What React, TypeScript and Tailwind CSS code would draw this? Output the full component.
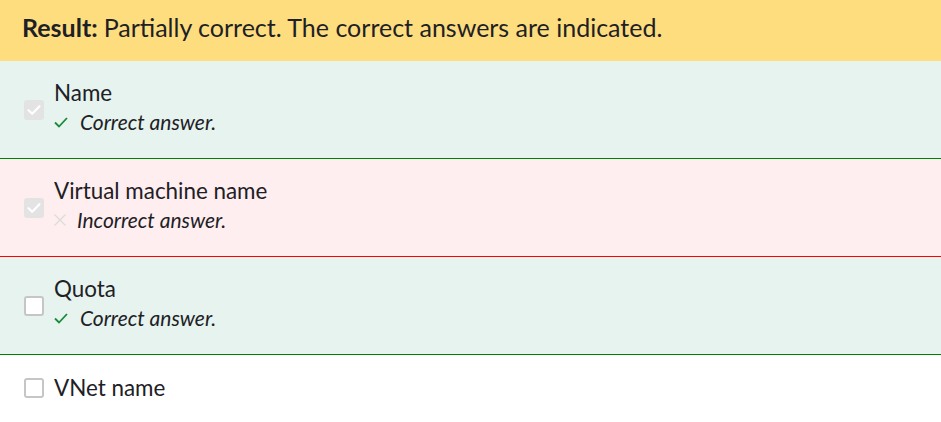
import React from "react";

type Opt = {
  label: string;
  checked: boolean;
  state?: "correct" | "incorrect";
};

const options: Opt[] = [
  { label: "Name", checked: true, state: "correct" },
  { label: "Virtual machine name", checked: true, state: "incorrect" },
  { label: "Quota", checked: false, state: "correct" },
  { label: "VNet name", checked: false },
];

const Box = ({ checked, shift }: { checked: boolean; shift: boolean }) =>
  checked ? (
    <span className={`w-5 h-5 rounded-[3px] bg-[#e3e3e3] flex items-center justify-center shrink-0 ${shift ? "mt-[8px]" : ""}`}>
      <svg width="16" height="16" viewBox="0 0 16 16" fill="none">
        <path d="M2.5 8.2 6.2 11.8 13.5 4.2" stroke="#fff" strokeWidth="2.2" strokeLinecap="round" strokeLinejoin="round" />
      </svg>
    </span>
  ) : (
    <span className={`w-5 h-5 rounded-[3px] bg-white border-2 border-[#c6c6c6] shrink-0 ${shift ? "mt-[8px]" : ""}`} />
  );

const Tick = () => (
  <svg width="14" height="11" viewBox="0 0 14 11" fill="none" className="mr-[12px] shrink-0">
    <path d="M1 5.5 5 9.5 13 1" stroke="#1a8a3a" strokeWidth="1.8" />
  </svg>
);

const Cross = () => (
  <svg width="12" height="12" viewBox="0 0 12 12" fill="none" className="mr-[11px] shrink-0">
    <path d="M0.5 0.5 11.5 11.5M11.5 0.5 0.5 11.5" stroke="#dcdcdc" strokeWidth="1.3" />
  </svg>
);

export default function App() {
  return (
    <div className="w-[941px] min-h-[422px] bg-white text-[#1d2125]" style={{ fontFamily: "Lato, 'Liberation Sans', sans-serif" }}>
      <div className="h-[61px] bg-[#fedd7e] flex items-center px-[22px] pb-[5px] text-[25px]">
        <span className="font-bold mr-[6px]">Result:</span>
        <span>Partially correct. The correct answers are indicated.</span>
      </div>
      {options.map((o) => (
        <div
          key={o.label}
          className={`flex items-center gap-[10px] pl-[24px] ${
            o.state === "correct"
              ? "bg-[#e6f3ee] border-b border-solid border-b-[#008000] pt-[15px] pb-[23px]"
              : o.state === "incorrect"
              ? "bg-[#ffeef0] border-b border-solid border-b-[#ff0000] pt-[15px] pb-[23px]"
              : "pt-[16px] pb-[16px]"
          }`}
        >
          <Box checked={o.checked} shift={!!o.state} />
          <div>
            <div className="text-[22.4px] leading-[33px]">{o.label}</div>
            {o.state && (
              <div className="flex items-center h-[26px] text-[21px] leading-[26px] italic">
                {o.state === "correct" ? <Tick /> : <Cross />}
                <span>{o.state === "correct" ? "Correct answer." : "Incorrect answer."}</span>
              </div>
            )}
          </div>
        </div>
      ))}
    </div>
  );
}
